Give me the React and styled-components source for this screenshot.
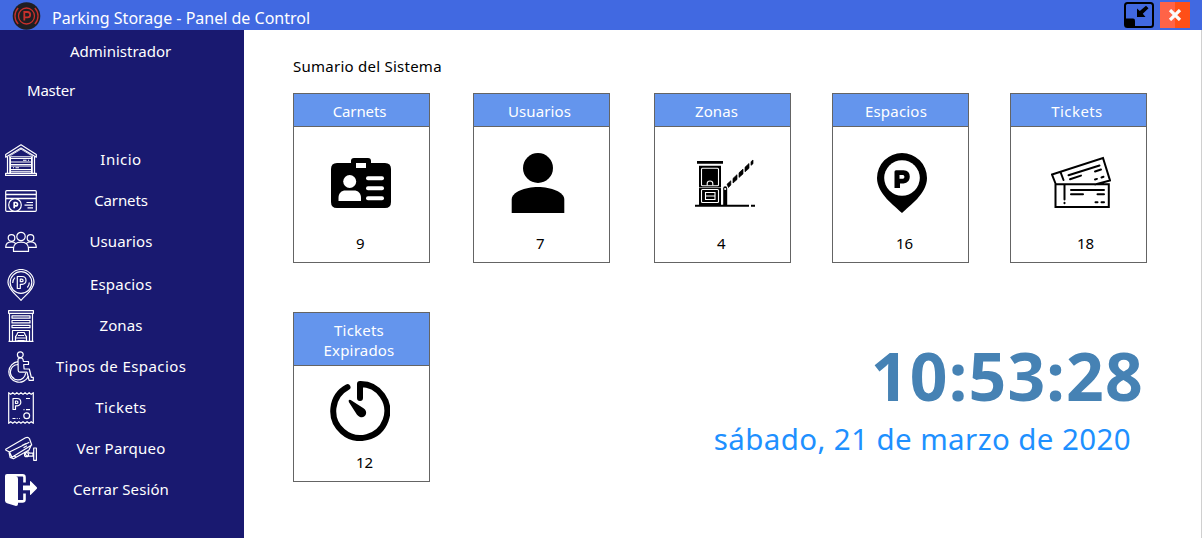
import React from "react";
import styled, { createGlobalStyle } from "styled-components";

const GlobalStyle = createGlobalStyle`
  * { box-sizing: border-box; }
  body {
    margin: 0;
    background: #fff;
    font-family: "Noto Sans", "Open Sans", sans-serif;
    font-size: 15px;
    line-height: 20px;
    overflow: hidden;
  }
  svg { display: block; flex: none; }
`;

const Window = styled.div`
  height: 538px;
  display: flex;
  flex-direction: column;
`;

const TitleBar = styled.header`
  height: 30px;
  flex: none;
  display: flex;
  align-items: flex-start;
  padding: 2px 12px 0;
  background: #4169e1;
  color: #fff;
`;

const WindowTitle = styled.h1`
  flex: 1;
  margin: 6px 0 0 11px;
  font-size: 16px;
  font-weight: 400;
  line-height: 20px;
`;

const CloseButton = styled.button`
  width: 30px;
  height: 26px;
  margin-left: 6px;
  padding: 0;
  border: 0;
  display: flex;
  align-items: center;
  justify-content: center;
  background: linear-gradient(90deg, #ff6347 50%, #ff4f17 50%);
`;

const Body = styled.div`
  flex: 1;
  display: flex;
`;

const Sidebar = styled.aside`
  width: 244px;
  background: #191970;
  color: #fff;
`;

const Role = styled.div`
  padding: 11px 0 0 70px;
`;

const UserName = styled.div`
  padding: 19px 0 0 27px;
  letter-spacing: -0.2px;
`;

const Menu = styled.nav`
  margin-top: 39px;
`;

const MenuItem = styled.a`
  height: 41px;
  margin-top: ${(p) => p.$gap || 0}px;
  padding-left: 5px;
  display: flex;
  align-items: center;
`;

const MenuLabel = styled.span`
  width: 168px;
  margin-top: -1px;
  text-align: center;
  letter-spacing: ${(p) => p.$spacing}px;
`;

const Main = styled.main`
  flex: 1;
  padding: 26px 0 0 49px;
  border-right: 1px solid #d0d0d0;
`;

const Heading = styled.h2`
  margin: 0 0 17px;
  font-size: 15px;
  font-weight: 400;
  line-height: 20px;
  letter-spacing: 0.25px;
`;

const Grid = styled.div`
  display: grid;
  grid-template-columns: 180px 181px 178px 178px 137px;
  row-gap: 49px;
`;

const Card = styled.section`
  width: 137px;
  height: 170px;
  border: 1px solid #646464;
`;

const CardHeader = styled.div`
  height: ${(p) => (p.$tall ? 53 : 33)}px;
  padding: 7px ${(p) => p.$inset}px 0 0;
  border-bottom: 1px solid #646464;
  background: #6495ed;
  color: #fff;
  text-align: center;
  white-space: pre-line;
  letter-spacing: ${(p) => p.$spacing}px;
`;

const CardBody = styled.div`
  display: flex;
  flex-direction: column;
  gap: ${(p) => (p.$tall ? 11 : 20)}px;
  padding: ${(p) => (p.$tall ? 15 : 26)}px 0 0 ${(p) => p.$left}px;
`;

const Count = styled.div`
  padding-left: ${(p) => p.$indent}px;
`;

const Clock = styled.div`
  grid-column: 2 / 6;
  padding-top: 30px;
  text-align: right;
  white-space: nowrap;
`;

const Time = styled.div`
  padding-right: 3px;
  color: #4682b4;
  font-size: 66px;
  font-weight: 700;
  line-height: 66px;
  letter-spacing: 1.2px;
`;

const DateText = styled.div`
  margin-top: 11px;
  padding-right: 16px;
  color: #1e90ff;
  font-size: 29.5px;
  line-height: 40px;
  letter-spacing: 0.4px;
`;

const MenuSvg = ({ children }) => (
  <svg width="32" height="32" viewBox="0 0 32 32" fill="none" stroke="#fff" strokeWidth="1.2" strokeLinejoin="round">
    {children}
  </svg>
);

const GarageIcon = () => (
  <MenuSvg>
    <path d="M.7 10.500 16 .8l15.300 9.700v2.700L16 4 .7 13.200z" />
    <path d="M2.500 12.500V29.500M4.800 11.500V29.500M29.500 12.500V29.500M27.200 11.500V29.500M.6 29.400H31.400V31.400H.6z" />
    <path d="M5.500 11.500 16 5.200l10.500 6.300" strokeWidth=".8" />
    <path d="M5.500 12.800h21v16.400h-21z" strokeWidth="1" />
    <path d="M5.500 14.500h21M5.500 18h21M5.500 20.500h21M5.500 22h21M5.500 25.500h21M5.500 27.300h21" strokeWidth="1" />
    <path d="M18 16.300h3.500M23 16.300h1M8 23.800h1M10.500 23.800h3.500" strokeWidth="1.100" />
  </MenuSvg>
);

const CardIcon = () => (
  <MenuSvg>
    <rect x=".7" y="5.700" width="30.600" height="20.600" rx="1" />
    <path d="M1 9.500H31M1 13.500H31" strokeWidth="1.500" />
    <path d="M21.500 17.500h6.500M19.500 20.200h8.500M22.500 22.800h5.500" />
    <circle cx="10" cy="20" r="6.300" fill="#191970" />
    <path d="M9.200 23.300v-5.800h1.600a1.600 1.600 0 0 1 0 3.400H9.200" strokeWidth="1.700" />
  </MenuSvg>
);

const UsersIcon = () => (
  <MenuSvg>
    <circle cx="6.500" cy="12" r="3.300" />
    <circle cx="25.500" cy="12" r="3.300" />
    <circle cx="16" cy="10.500" r="4.200" />
    <path d="M8.500 25.400v-3c0-4 3-6.200 7.500-6.200s7.500 2.200 7.500 6.200v3zM8.500 21.400H.7c0-3.400 2.200-5.600 5.800-5.600 1.700 0 3 .5 4 1.500M23.500 21.400h7.800c0-3.400-2.200-5.600-5.800-5.600-1.700 0-3 .5-4 1.500" />
  </MenuSvg>
);

const PinIcon = () => (
  <MenuSvg>
    <path d="M16 31.300C12.500 27 3 20.500 3 13.500a13 13 0 0 1 26 0C29 20.500 19.500 27 16 31.300z" />
    <circle cx="16" cy="13.500" r="10.800" />
    <path d="M12.300 19.500v-12h4.800c5.200 0 5.200 7.800 0 7.800h-1.800v4.200zM15.300 10.200v2.500h1.500c1.700 0 1.700-2.500 0-2.500zM7.700 14c0-2.300.7-4 2.200-5.400M24.300 13.500c0 2.200-.7 3.700-2 5" />
  </MenuSvg>
);

const DepotIcon = () => (
  <MenuSvg>
    <path d="M3.600.700h24.800v2.600H3.600zM4.500 3.300v28M27.500 3.300v28M3.500 31.300h25M7 5.800h18v2.400H7zM7 10.500h18v2.400H7zM7 15.300h18v2.400H7zM7.500 31v-10.500h17V31" />
    <path d="M11.500 25.500l1.300-3h6.400l1.300 3 1 1v4.500H10.500v-4.500zM10.500 28h11M13 25.500h6M12.500 30.500h7" />
  </MenuSvg>
);

const WheelchairIcon = () => (
  <MenuSvg>
    <circle cx="15.300" cy="3.700" r="2.900" />
    <path d="M13 8.300c1-2 4.200-2 5 0l.4 2.200h5.100v3h-4.800l.4 4.500h5.200l2 8.400h2v3h-4.200l-2.100-8.300h-7.300c-1 0-1.500-.6-1.500-1.500z" />
    <path d="M13 10.700A10.300 10.300 0 1 0 23.600 25M13 13.500a7.700 7.700 0 1 0 7.700 8.700M5.500 22.700c.4 2.600 2 4.200 4 5" />
  </MenuSvg>
);

const ReceiptIcon = () => (
  <MenuSvg>
    <path d="M3.700.700l2 1.700 2.050-1.700 2.050 1.700 2.050-1.700 2.050 1.700L15.950.700 18 2.400 20.050.700l2.050 1.700 2.050-1.700 2.050 1.700 2.100-1.700v30.600l-2.100-1.700-2.050 1.700-2.050-1.700-2.050 1.700L18 29.600l-2.050 1.700-2.050-1.700-2.050 1.700-2.050-1.700-2.050 1.700-2.050-1.700-2 1.700z" />
    <path d="M8 17.500v-11h4.200c4.800 0 4.800 7.300 0 7.300h-1.700v3.700zM10.500 9v2.500h1.300c1.500 0 1.500-2.500 0-2.500zM21 6.500h4M18.500 17.700h1M21 17.700h4M7.500 26.500h3M11.700 26.500h1M14 26.500h.8" />
    <circle cx="21.700" cy="23.700" r="2.900" />
  </MenuSvg>
);

const CameraIcon = () => (
  <MenuSvg>
    <path d="M.7 16.300 20.500 4.700c1.800-.8 3.200-.3 4 1l2.200 6.200L7 24.300 4.500 19 1 17.300zM4.500 19l19.800-9.700M4 19.300l1.200 5.200 3.300 1.200L24 17l2.500-5.500M17 12.500l4-2M18.500 14.800l3.500-2M8.700 22.500l2.800 2" />
    <path d="M20 19.500c.2 2 1.500 3.300 3 3.600h5v-3h-3.500l-2-2M28.700 15h2.700v12.300h-2.700z" />
    <circle cx="21.500" cy="21.700" r="2" />
  </MenuSvg>
);

const LogoutIcon = () => (
  <MenuSvg>
    <path d="M2 0h2l7.500 2.300Q13 3 13 5v25q0 2-2 2L2 29.300Q0 28.600 0 26.500V2Q0 0 2 0z" fill="#fff" stroke="none" />
    <path d="M3 1.300h14.500q2 0 2 2v5.200M12 27.400h5.500q2 0 2-2v-6" strokeWidth="2.600" />
    <path d="M18 11.500h7V7.500q0-.8.800-.2l6 6q.5.700 0 1.400l-6 6q-.8.600-.8-.2v-4.300H18z" fill="#fff" stroke="none" />
  </MenuSvg>
);

const LogoIcon = () => (
  <svg width="29" height="28" viewBox="0 0 29 28" fill="none" stroke="#c8302c" strokeWidth="1.300">
    <circle cx="14.500" cy="14" r="13.800" fill="#201e22" stroke="none" />
    <circle cx="14.500" cy="14" r="8" />
    <path d="M6.200 6a11.500 11.500 0 0 0 0 16M22.800 6a11.500 11.500 0 0 1 0 16" />
    <path d="M12.300 18.500V10h3.200c3.600 0 3.600 5.300 0 5.300h-3.200" strokeWidth="1.800" />
  </svg>
);

const RestoreIcon = () => (
  <svg width="30" height="26" viewBox="0 0 30 26">
    <rect x="1" y="1" width="28" height="24" rx="2.500" fill="none" stroke="#000" strokeWidth="2" />
    <path d="M1 16.500h8q2 0 2 2V25H3q-2 0-2-2z" />
    <path d="M13 15V6.500l2.800 2.500L22 3.800l2.500 2.500-5.700 5.500 2.700 3.200z" />
  </svg>
);

const CloseIcon = () => (
  <svg width="14" height="12" viewBox="0 0 14 12">
    <path d="M2 1l10 10M12 1L2 11" stroke="#fafafa" strokeWidth="3.200" />
  </svg>
);

const CardSvg = ({ children }) => (
  <svg width="60" height="60" viewBox="0 0 60 60" fill="#000">
    {children}
  </svg>
);

const BadgeArt = () => (
  <CardSvg>
    <path d="M6 10h14V8q0-3 3-3h14q3 0 3 3v2h14q6 0 6 6v33q0 6-6 6H6q-6 0-6-6V16q0-6 6-6z" />
    <g fill="#fff">
      <path d="M25 10h10v5H25z" />
      <circle cx="18.700" cy="28.500" r="6.500" />
      <path d="M7.500 48v-3c0-5 3-7.500 7-7.500h8.500c4 0 7 2.500 7 7.500v3z" />
      <rect x="35" y="23.300" width="18" height="4" rx="2" />
      <rect x="35" y="33.300" width="18" height="4" rx="2" />
      <rect x="35" y="43.300" width="18" height="4" rx="2" />
    </g>
  </CardSvg>
);

const PersonArt = () => (
  <CardSvg>
    <circle cx="30" cy="15" r="15" />
    <path d="M3.700 60V46.500C3.700 39 17 34 30 34s26.300 5 26.300 12.500V60z" />
  </CardSvg>
);

const BarrierArt = () => (
  <CardSvg>
    <path d="M2 8h26v2.800H2zM4 12.800h22V52H4z" />
    <g fill="none" stroke="#fff" strokeWidth="1.100">
      <rect x="6.500" y="15.300" width="17" height="17.500" rx="1" />
      <rect x="6.500" y="36.500" width="17" height="13" rx="1" />
      <path d="M10.500 39.500h9.500v7h-9.500zM10.500 43h9.500M12.200 32.500v-2q0-2.500 2.800-2.500t2.800 2.500v2" />
    </g>
    <path d="M4 34.600h22" stroke="#fff" strokeWidth=".600" />
    <path d="M28.200 52V35.500q0-2.300 2-2.300t2 2.300V52z" />
    <circle cx="30.200" cy="36" r="1.100" fill="#fff" />
    <path d="M0 51.800h54v2H0zM56 51.800h4v2h-4z" />
    <path d="M32 31.200l3.800-3.400v4.200L33.500 34.500zM38 25.400l4-3.700v4.800L38 30zM44 19.800l4-3.700v4.800l-4 3.500zM50 14.200l4-3.700v4.800l-4 3.500zM56 8.700l2-1.700v3.800l-2 1.500z" stroke="#000" strokeWidth=".7" strokeLinejoin="round" />
  </CardSvg>
);

const PinArt = () => (
  <CardSvg>
    <path d="M30 60C23 53 5 41 5 25a25 25 0 0 1 50 0c0 16-18 28-25 35z" />
    <circle cx="30" cy="25" r="17.800" fill="#fff" />
    <path fillRule="evenodd" d="M24 17.200h7.500q6.300.4 6.300 6.500T31.500 30.500h-3.500V35h-5.500V18.700q0-1.500 1.500-1.500zM27.500 22v3.800h3.800q2.400-1.900 0-3.800z" />
  </CardSvg>
);

const TicketsArt = () => (
  <CardSvg>
    <g fill="none" stroke="#000" strokeWidth="2" strokeLinecap="round">
      <path d="M4.500 31.300h53.300V54H4.500zM4.500 30.500 1 21.500 52 5l7 22.500-15 4M9.500 19l3 8M13.500 32v14.500M13.500 49.700v.5" />
      <path d="M20 37h33M20 41.300h12M46.500 41.300h6.500M44.500 49.300h2M50.500 49.300h2.500M17.500 22.200 48.500 12.500M19 26.200l11-3.600M44 18.500l6-2M44 26.500l2-.6M50.500 24.500l2-.7" />
    </g>
  </CardSvg>
);

const TimerArt = () => (
  <CardSvg>
    <path d="M17.500 6.200A27 27 0 1 0 30 3v14" fill="none" stroke="#000" strokeWidth="6" strokeLinecap="round" strokeLinejoin="round" />
    <path d="M18.700 19.200q.5-.8 2-.2l12.800 8.200c5.600 4 1.500 11-4 8.500-1.600-.7-2.500-1.800-3.300-3.200L18.800 21z" />
  </CardSvg>
);

const menu = [
  { label: "Inicio", Icon: GarageIcon, spacing: 0.5 },
  { label: "Carnets", Icon: CardIcon, spacing: -0.1 },
  { label: "Usuarios", Icon: UsersIcon, spacing: 0.1 },
  { label: "Espacios", Icon: PinIcon, spacing: 0.2 },
  { label: "Zonas", Icon: DepotIcon, spacing: 0.1 },
  { label: "Tipos de Espacios", Icon: WheelchairIcon, spacing: 0.4 },
  { label: "Tickets", Icon: ReceiptIcon, spacing: 0.4 },
  { label: "Ver Parqueo", Icon: CameraIcon, spacing: 0.2 },
  { label: "Cerrar Sesión", Icon: LogoutIcon, spacing: 0.1 },
].map((item) => (item.label === "Espacios" ? { ...item, gap: 2 } : item));

const cards = [
  { title: "Carnets", count: 9, Art: BadgeArt, inset: 4, left: 37, indent: 25, spacing: -0.1 },
  { title: "Usuarios", count: 7, Art: PersonArt, inset: 4, left: 34, indent: 28, spacing: 0.1 },
  { title: "Zonas", count: 4, Art: BarrierArt, inset: 12, left: 40, indent: 22, spacing: 0.1 },
  { title: "Espacios", count: 16, Art: PinArt, inset: 9, left: 39, indent: 24, spacing: 0.2 },
  { title: "Tickets", count: 18, Art: TicketsArt, inset: 3, left: 40, indent: 26, spacing: 0.4 },
  { title: "Tickets\nExpirados", count: 12, Art: TimerArt, inset: 5, left: 36, indent: 26, spacing: 0.2, tall: true },
];

export default function App() {
  return (
    <Window>
      <GlobalStyle />
      <TitleBar>
        <LogoIcon />
        <WindowTitle>Parking Storage - Panel de Control</WindowTitle>
        <RestoreIcon />
        <CloseButton aria-label="Cerrar">
          <CloseIcon />
        </CloseButton>
      </TitleBar>
      <Body>
        <Sidebar>
          <Role>Administrador</Role>
          <UserName>Master</UserName>
          <Menu>
            {menu.map(({ label, Icon, spacing, gap }) => (
              <MenuItem key={label} $gap={gap}>
                <Icon />
                <MenuLabel $spacing={spacing}>{label}</MenuLabel>
              </MenuItem>
            ))}
          </Menu>
        </Sidebar>
        <Main>
          <Heading>Sumario del Sistema</Heading>
          <Grid>
            {cards.map(({ title, count, Art, inset, left, indent, spacing, tall }) => (
              <Card key={title}>
                <CardHeader $inset={inset} $spacing={spacing} $tall={tall}>
                  {title}
                </CardHeader>
                <CardBody $left={left} $tall={tall}>
                  <Art />
                  <Count $indent={indent}>{count}</Count>
                </CardBody>
              </Card>
            ))}
            <Clock>
              <Time>10:53:28</Time>
              <DateText>sábado, 21 de marzo de 2020</DateText>
            </Clock>
          </Grid>
        </Main>
      </Body>
    </Window>
  );
}
